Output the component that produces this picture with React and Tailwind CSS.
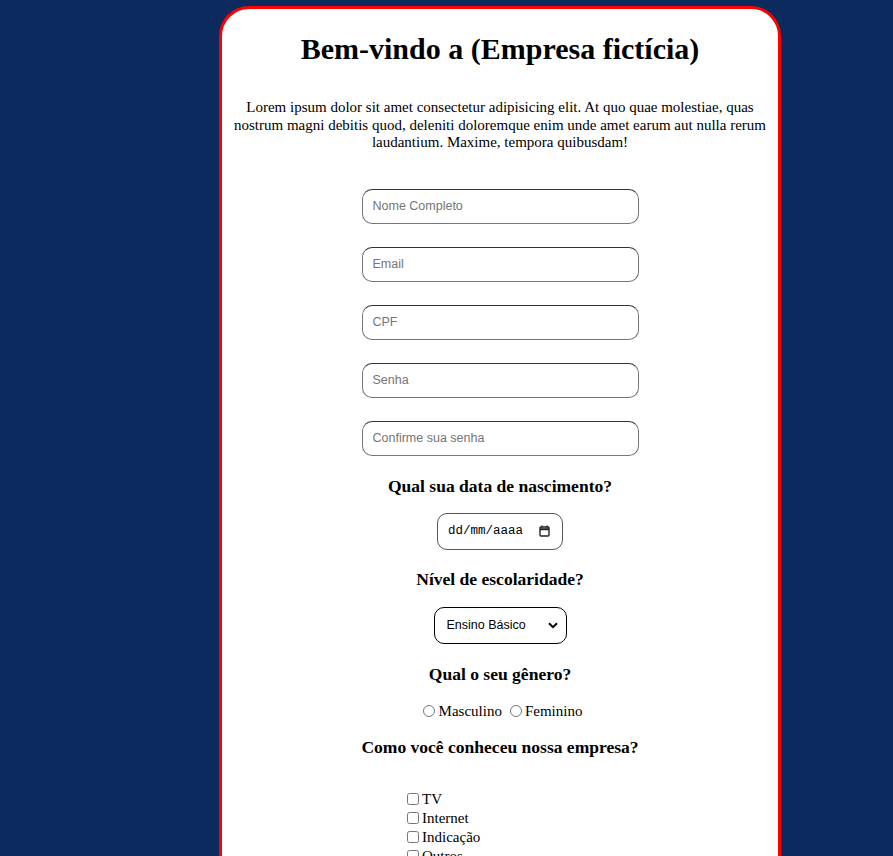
const inputs = ["Nome Completo", "Email", "CPF", "Senha", "Confirme sua senha"];
const sources = ["TV", "Internet", "Indicação", "Outros"];

function Question({ children, className }) {
    return (
        <h3 className={`text-center text-[17.55px] leading-[22px] font-bold ${className}`}>
            {children}
        </h3>
    );
}

export default function App() {
    return (
        <div className="h-[856px] overflow-hidden bg-[#0c2a5e] pt-[6px] font-['Liberation_Serif',serif] text-black">
            <div className="ml-[219px] w-[562px] h-[900px] bg-white border-[3px] border-[#ff0000] rounded-[30px]">
                <h1 className="mt-[21px] text-center text-[30px] leading-[37px] font-bold">
                    Bem-vindo a (Empresa fictícia)
                </h1>
                <p className="mt-[32px] px-[10px] text-center text-[15px] leading-[17.5px]">
                    Lorem ipsum dolor sit amet consectetur adipisicing elit. At quo quae molestiae, quas
                    nostrum magni debitis quod, deleniti doloremque enim unde amet earum aut nulla rerum
                    laudantium. Maxime, tempora quibusdam!
                </p>

                <div className="mt-[37px] flex flex-col items-center gap-[23px]">
                    {inputs.map((label) => (
                        <input
                            key={label}
                            placeholder={label}
                            className="w-[277px] h-[35px] shrink-0 rounded-[10px] border border-[#767676] border-t-[#333] px-[10px] font-['Liberation_Sans',sans-serif] text-[12.5px] placeholder:text-[#757575] outline-none"
                        />
                    ))}
                </div>

                <Question className="mt-[19px]">Qual sua data de nascimento?</Question>
                <div className="mt-[16px] flex justify-center">
                    <div className="w-[126px] h-[37px] rounded-[10px] border border-[#555] flex items-center justify-between pl-[10px] pr-[12px]">
                        <span className="font-['Liberation_Mono',monospace] text-[12.5px]">dd/mm/aaaa</span>
                        <svg width="11" height="12" viewBox="0 0 11 12" fill="none" stroke="#222" strokeWidth="1.4">
                            <rect x="1" y="2" width="9" height="9" rx="1" />
                            <line x1="1" y1="4.2" x2="10" y2="4.2" strokeWidth="2" />
                            <line x1="3" y1="0.5" x2="3" y2="2.5" />
                            <line x1="8" y1="0.5" x2="8" y2="2.5" />
                        </svg>
                    </div>
                </div>

                <Question className="mt-[18px]">Nível de escolaridade?</Question>
                <div className="mt-[17px] flex justify-center">
                    <div className="w-[133px] h-[37px] rounded-[10px] border border-black flex items-center justify-between pl-[12px] pr-[8px] font-['Liberation_Sans',sans-serif] text-[12.5px]">
                        <span>Ensino Básico</span>
                        <svg width="10" height="7" viewBox="0 0 10 7" fill="none" stroke="#000" strokeWidth="2">
                            <path d="M1 1.2 5 5.2 9 1.2" />
                        </svg>
                    </div>
                </div>

                <Question className="mt-[19px]">Qual o seu gênero?</Question>
                <div className="mt-[17px] h-[19px] flex items-center justify-center text-[15px]">
                    <label className="flex items-center">
                        <input type="radio" name="genero" className="ml-[5px] mr-[4px] w-[12px] h-[12px]" />
                        Masculino
                    </label>
                    <label className="ml-[3px] flex items-center">
                        <input type="radio" name="genero" className="ml-[5px] mr-[3px] w-[12px] h-[12px]" />
                        Feminino
                    </label>
                </div>

                <Question className="mt-[15px]">Como você conheceu nossa empresa?</Question>
                <div className="mt-[32px] pl-[181px] text-[15px]">
                    {sources.map((s) => (
                        <label key={s} className="h-[19px] flex items-center">
                            <input type="checkbox" className="ml-[4px] mr-[3px] w-[12px] h-[12px]" />
                            {s}
                        </label>
                    ))}
                </div>
            </div>
        </div>
    );
}
